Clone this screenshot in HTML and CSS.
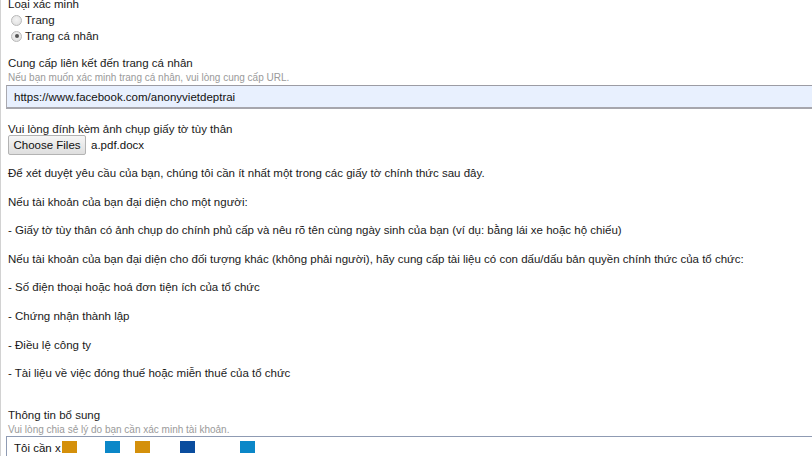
FILE: index.html
```html
<!DOCTYPE html>
<html lang="vi">
<head>
<meta charset="utf-8">
<title>Xác minh</title>
<link rel="stylesheet" href="styles.css">
</head>
<body>
<div class="page">
  <div class="label">Loại xác minh</div>
  <div class="radios">
    <label class="radio-row"><span class="radio"></span>Trang</label>
    <label class="radio-row"><span class="radio checked"></span>Trang cá nhân</label>
  </div>

  <div class="label mt-field">Cung cấp liên kết đến trang cá nhân</div>
  <div class="hint">Nếu bạn muốn xác minh trang cá nhân, vui lòng cung cấp URL.</div>
  <div class="textbox autofill">https://www.facebook.com/anonyvietdeptrai</div>

  <div class="label mt-upload">Vui lòng đính kèm ảnh chụp giấy tờ tùy thân</div>
  <div class="file-row">
    <span class="file-btn">Choose Files</span>
    <span class="file-name">a.pdf.docx</span>
  </div>

  <div class="info">
    <p>Để xét duyệt yêu cầu của bạn, chúng tôi cần ít nhất một trong các giấy tờ chính thức sau đây.</p>
    <p>Nếu tài khoản của bạn đại diện cho một người:</p>
    <p>- Giấy tờ tùy thân có ảnh chụp do chính phủ cấp và nêu rõ tên cùng ngày sinh của bạn (ví dụ: bằng lái xe hoặc hộ chiếu)</p>
    <p>Nếu tài khoản của bạn đại diện cho đối tượng khác (không phải người), hãy cung cấp tài liệu có con dấu/dấu bản quyền chính thức của tổ chức:</p>
    <p>- Số điện thoại hoặc hoá đơn tiện ích của tổ chức</p>
    <p>- Chứng nhận thành lập</p>
    <p>- Điều lệ công ty</p>
    <p>- Tài liệu về việc đóng thuế hoặc miễn thuế của tổ chức</p>
  </div>

  <div class="label mt-extra">Thông tin bổ sung</div>
  <div class="hint">Vui lòng chia sẻ lý do bạn cần xác minh tài khoản.</div>
  <div class="textbox area">
    <span class="typed">Tôi cần x</span>
    <span class="sq orange s1"></span>
    <span class="sq blue s2"></span>
    <span class="sq orange s3"></span>
    <span class="sq navy s4"></span>
    <span class="sq blue s5"></span>
  </div>
</div>
</body>
</html>
```

FILE: styles.css
```css
html, body {
  margin: 0;
  padding: 0;
  background: #ffffff;
  overflow: hidden;
}
body {
  font-family: "Liberation Sans", Arial, sans-serif;
  font-size: 11.5px;
  color: #1a1a1a;
}
.page {
  border-left: 1px solid #d2d2d2;
  padding-left: 7px;
  margin-top: -4px;
  min-height: 470px;
}
.label {
  line-height: 16px;
  font-size: 11.5px;
  color: #1a1a1a;
}
.radios {
  display: flex;
  flex-direction: column;
  padding-left: 3px;
}
.radio-row {
  display: flex;
  align-items: center;
  height: 16px;
  gap: 3px;
}
.radio {
  width: 9px;
  height: 9px;
  border-radius: 50%;
  border: 1px solid #b9b9b9;
  background: radial-gradient(circle at 50% 40%, #f4f4f4 0%, #dcdcdc 100%);
  position: relative;
  box-sizing: content-box;
}
.radio.checked::after {
  content: "";
  position: absolute;
  left: 2.5px;
  top: 2.5px;
  width: 4px;
  height: 4px;
  border-radius: 50%;
  background: #555;
}
.mt-field { margin-top: 11px; }
.hint {
  font-size: 10px;
  line-height: 13px;
  color: #9a9a9a;
}
.textbox {
  box-sizing: border-box;
  width: 830px;
  margin-left: -2px;
  border: 1px solid #a9a9b0;
  border-top-color: #9c9ca4;
  font-size: 11.5px;
  color: #111;
}
.autofill {
  margin-top: 1px;
  height: 24px;
  line-height: 22px;
  padding-left: 7px;
  background: #e8f0fe;
  border-bottom: 2px solid #a6a6ad;
}
.mt-upload { margin-top: 12px; }
.file-row {
  display: flex;
  align-items: center;
  gap: 5px;
  margin-top: -3px;
  height: 21px;
}
.file-btn {
  box-sizing: border-box;
  height: 20px;
  width: 78px;
  line-height: 18px;
  text-align: center;
  font-size: 11.5px;
  color: #111;
  border: 1px solid #b3b3b3;
  border-radius: 2px;
  background: linear-gradient(#f6f6f6, #dedede);
}
.file-name {
  font-size: 11.5px;
  color: #111;
}
.info {
  margin-top: 10px;
}
.info p {
  margin: 0 0 12.6px 0;
  line-height: 16px;
}
.mt-extra { margin-top: 26px; }
.area {
  position: relative;
  height: 40px;
  padding-left: 7px;
  line-height: 22px;
  background: #fff;
  border-color: #8f9bb3;
}
.typed { position: relative; }
.sq {
  position: absolute;
  top: 4px;
  width: 15px;
  height: 12px;
}
.orange { background: #d4900b; }
.blue { background: #0b87c8; }
.navy { background: #0a4d9e; }
.s1 { left: 55px; }
.s2 { left: 98px; }
.s3 { left: 128px; }
.s4 { left: 173px; }
.s5 { left: 233px; }
```
